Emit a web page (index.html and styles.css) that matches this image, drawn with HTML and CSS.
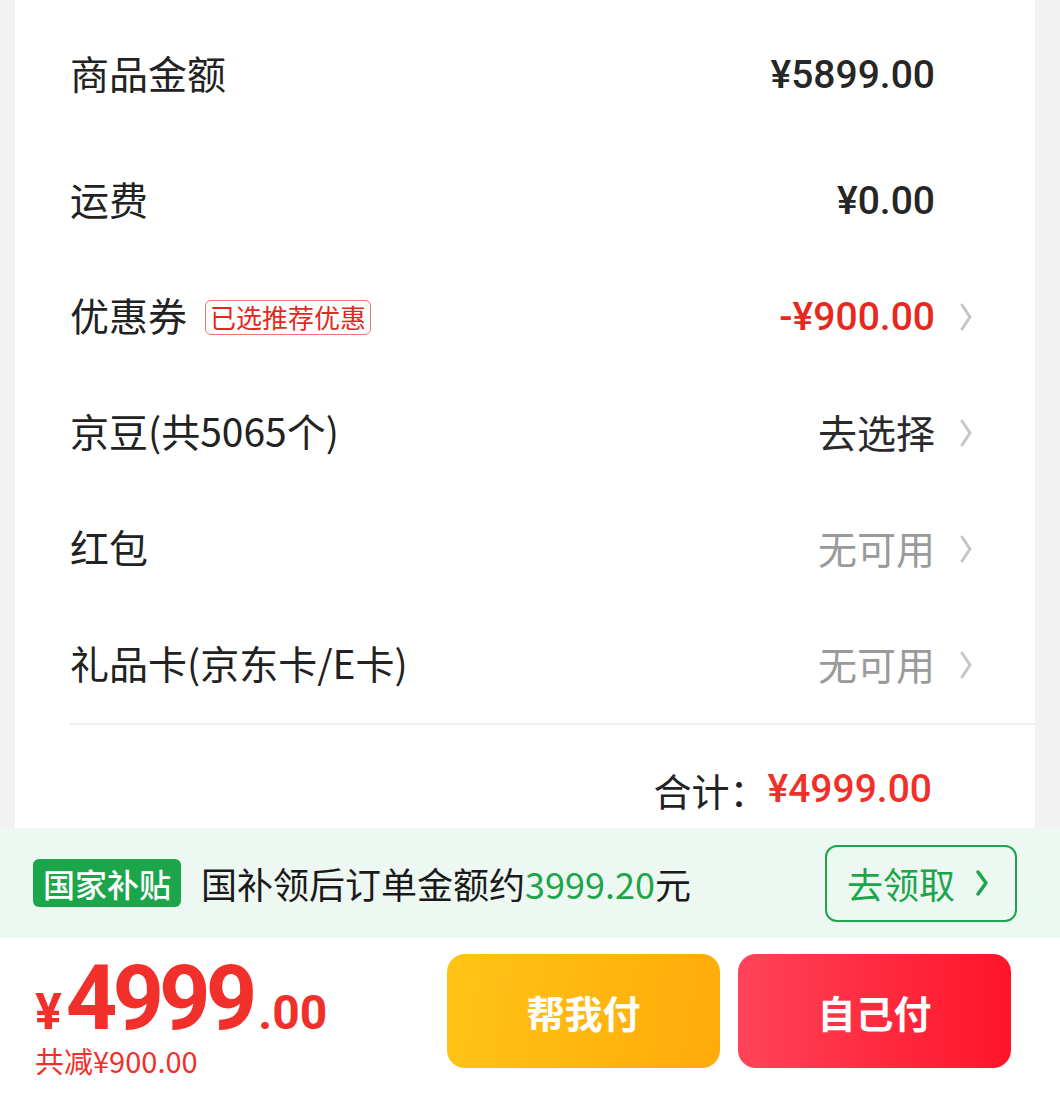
FILE: index.html
```html
<!DOCTYPE html>
<html lang="zh-CN">
<head>
<meta charset="utf-8">
<title>订单结算</title>
<link rel="stylesheet" href="styles.css">
</head>
<body>
<div class="page">
  <div class="card">
    <div class="row row-first">
      <span class="label">商品金额</span>
      <span class="value num">¥5899.00</span>
      <span class="arrow-slot"></span>
    </div>
    <div class="row">
      <span class="label">运费</span>
      <span class="value num">¥0.00</span>
      <span class="arrow-slot"></span>
    </div>
    <div class="row">
      <span class="label">优惠券</span>
      <span class="tag">已选推荐优惠</span>
      <span class="value num red">-¥900.00</span>
      <span class="arrow-slot"><svg class="chev" viewBox="0 0 12 28" width="12" height="28"><polyline points="2,2 10,14 2,26" fill="none" stroke="#c6c6c6" stroke-width="3" stroke-linecap="round" stroke-linejoin="round"/></svg></span>
    </div>
    <div class="row">
      <span class="label">京豆(共5065个)</span>
      <span class="value cjk">去选择</span>
      <span class="arrow-slot"><svg class="chev" viewBox="0 0 12 28" width="12" height="28"><polyline points="2,2 10,14 2,26" fill="none" stroke="#c6c6c6" stroke-width="3" stroke-linecap="round" stroke-linejoin="round"/></svg></span>
    </div>
    <div class="row">
      <span class="label">红包</span>
      <span class="value cjk muted">无可用</span>
      <span class="arrow-slot"><svg class="chev" viewBox="0 0 12 28" width="12" height="28"><polyline points="2,2 10,14 2,26" fill="none" stroke="#c6c6c6" stroke-width="3" stroke-linecap="round" stroke-linejoin="round"/></svg></span>
    </div>
    <div class="row">
      <span class="label">礼品卡(京东卡/E卡)</span>
      <span class="value cjk muted">无可用</span>
      <span class="arrow-slot"><svg class="chev" viewBox="0 0 12 28" width="12" height="28"><polyline points="2,2 10,14 2,26" fill="none" stroke="#c6c6c6" stroke-width="3" stroke-linecap="round" stroke-linejoin="round"/></svg></span>
    </div>
    <div class="divider"></div>
    <div class="total">
      <span class="total-label">合计：</span>
      <span class="total-value num">¥4999.00</span>
    </div>
  </div>

  <div class="subsidy">
    <span class="badge">国家补贴</span>
    <span class="subsidy-text">国补领后订单金额约<em>3999.20</em>元</span>
    <span class="claim">去领取<svg class="claim-chev" viewBox="0 0 14 28" width="14" height="28"><polyline points="3,3 11,14 3,25" fill="none" stroke="#1ca64b" stroke-width="3.5" stroke-linecap="round" stroke-linejoin="round"/></svg></span>
  </div>

  <div class="paybar">
    <div class="price-block">
      <div class="price"><span class="yen">¥</span><span class="int">4999</span><span class="dec">.00</span></div>
      <div class="saved">共减¥900.00</div>
    </div>
    <div class="btns">
      <span class="btn btn-help">帮我付</span>
      <span class="btn btn-self">自己付</span>
    </div>
  </div>
</div>
</body>
</html>
```
FILE: styles.css
```css
* { box-sizing: border-box; }
html, body { margin: 0; padding: 0; }
body {
  background: #f2f2f2;
  font-family: "Noto Sans CJK SC", "Noto Sans", sans-serif;
  color: #222;
}
.page { width: 1060px; height: 1106px; display: flex; flex-direction: column; overflow: hidden; }

.card {
  margin: 0 25px 0 15px;
  height: 828px;
  background: #fff;
  padding: 17px 0 0 55px;
  overflow: hidden;
  flex: none;
}
.row {
  display: flex;
  align-items: center;
  height: 116px;
  padding-right: 60px;
}
.row-first { margin-bottom: 10px; }
.label { font-size: 39px; color: #222; line-height: 1.2; padding-bottom: 5px; }
.tag {
  margin-left: 18px;
  font-size: 26px;
  line-height: 32px;
  height: 35px;
  padding: 0 4px;
  color: #e4281e;
  border: 1.5px solid #f0766c;
  border-radius: 6px;
}
.value { margin-left: auto; }
.num {
  font-family: Roboto, "Noto Sans", sans-serif;
  font-weight: 500;
  font-size: 39px;
  color: #262626;
}
.cjk { font-size: 39px; color: #2a2a2a; padding-bottom: 5px; }
.muted { color: #9a9a9a; }
.red { color: #e8281e; }
.arrow-slot { width: 40px; height: 28px; display: flex; justify-content: flex-end; padding-right: 3px; }
.chev { display: block; }

.divider { height: 2px; background: #efefef; }
.total {
  display: flex;
  justify-content: flex-end;
  align-items: center;
  padding: 28px 103px 0 0;
  height: 100px;
}
.total-label { font-size: 38px; color: #222; }
.total-value { color: #f2302a; }

.subsidy {
  flex: none;
  height: 110px;
  background: #eef8f2;
  display: flex;
  align-items: center;
  padding: 0 43px 0 33px;
}
.badge {
  background: #1ca64b;
  color: #fff;
  font-size: 32px;
  height: 48px;
  line-height: 48px;
  padding: 0 10px;
  border-radius: 6px;
  font-weight: 500;
}
.subsidy-text { margin-left: 20px; font-size: 36px; color: #1a1a1a; }
.subsidy-text em { font-style: normal; color: #1ca64b; }
.claim {
  margin-left: auto;
  width: 192px;
  height: 77px;
  border: 2px solid #1ca64b;
  border-radius: 12px;
  color: #1ca64b;
  font-size: 36px;
  display: flex;
  align-items: center;
  padding-left: 20px;
}
.claim-chev { margin-left: 20px; }

.paybar {
  flex: none;
  height: 168px;
  background: #fff;
  display: flex;
  align-items: flex-start;
  padding: 16px 49px 0 35px;
}
.price-block { display: flex; flex-direction: column; }
.price {
  color: #f2302b;
  font-family: Roboto, "Noto Sans", sans-serif;
  font-weight: 700;
  line-height: 90px;
  height: 90px;
  white-space: nowrap;
}
.yen { font-size: 50px; margin-right: 4px; line-height: 1; }
.int { font-size: 90px; letter-spacing: -5px; }
.dec { font-size: 48px; margin-left: 6px; line-height: 1; }
.saved { color: #f2302b; font-size: 29px; line-height: 32px; }

.btns { margin-left: auto; display: flex; gap: 18px; }
.btn {
  width: 273px;
  height: 114px;
  border-radius: 18px;
  color: #fff;
  font-size: 38px;
  font-weight: 700;
  display: flex;
  align-items: center;
  justify-content: center;
}
.btn-help { background: linear-gradient(100deg, #ffc416, #ffaa0b); }
.btn-self { background: linear-gradient(90deg, #ff4358, #ff1429); }
```
